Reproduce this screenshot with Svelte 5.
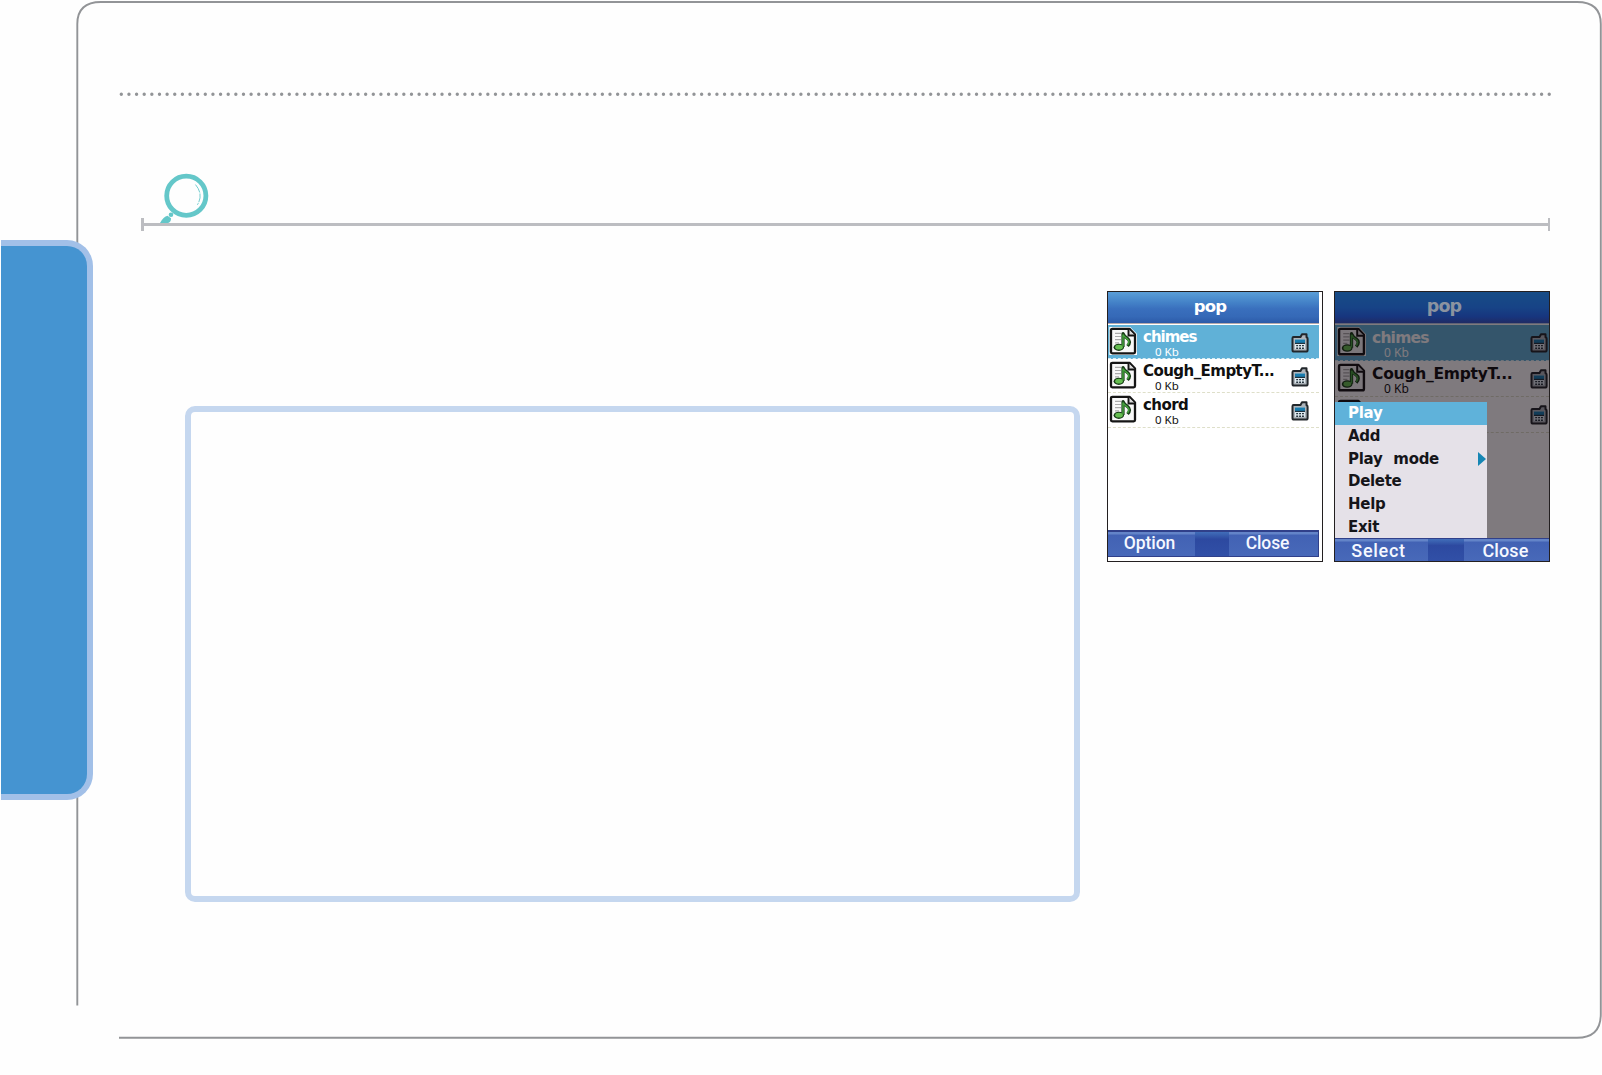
<script lang="ts">
	const tracks = ['chimes', 'Cough_EmptyT...', 'chord'];
	const menu = ['Play', 'Add', 'Play mode', 'Delete', 'Help', 'Exit'];
	let selectedTrack = $state(0);
	let selectedItem = $state(0);
</script>

{#snippet noteIcon()}
	<svg class="note" viewBox="0 0 28 28">
		<path d="M2 1.2H20L26.5 8V26.5H2Z" fill="#fbfbfb" stroke="#fff" stroke-width="3.4" />
		<path
			d="M3.5 1.8H20.5L26 7.5V25Q26 26.3 24.7 26.3H3.3Q2 26.3 2 25V3.2Q2 1.8 3.5 1.8Z"
			fill="#f8f8f8"
			stroke="#151515"
			stroke-width="2.3"
			stroke-linejoin="round"
		/>
		<path d="M19.5 2V8.5H26" fill="#ddd" stroke="#151515" stroke-width="1.9" />
		<path d="M6 6.3H12M6 9.5H12M6 12.7H12M6 15.9H10" stroke="#aaa" stroke-width="1.2" />
		<path
			d="M14 20V6.5Q15 9.5 18.5 11.5Q22.5 14.5 18.5 19"
			fill="none"
			stroke="#173c16"
			stroke-width="3.2"
			stroke-linejoin="round"
		/>
		<ellipse cx="9.8" cy="20.3" rx="5.2" ry="3.6" fill="#173c16" />
		<path d="M14 19.5V7.5Q15 10 18.3 12Q21.5 14.5 18.5 18" fill="none" stroke="#45a23e" stroke-width="1.5" />
		<ellipse cx="10" cy="20.2" rx="3.8" ry="2.4" fill="#65bd50" />
	</svg>
{/snippet}

{#snippet deviceIcon()}
	<svg class="device" viewBox="0 0 18 20">
		<path
			d="M2.5 4H9.5L11 1.3H15.5V4.3Q16.6 4.6 16.6 5.8V17Q16.6 18.6 15 18.6H3Q1.5 18.6 1.5 17V5.2Q1.5 4 2.5 4Z"
			fill="#aeb5bb"
			stroke="#22272b"
			stroke-width="2"
			stroke-linejoin="round"
		/>
		<path d="M4 6.7H14V15.8H4Z" fill="#dfeaf0" />
		<path d="M4 6.5H14V10H4Z" fill="#187cae" />
		<path d="M4 10.4H14" stroke="#20313c" stroke-width="1.2" />
		<path d="M5.2 12.6H13M5.2 15.2H13" stroke="#26343d" stroke-width="1.4" stroke-dasharray="1.9 1" />
	</svg>
{/snippet}

{#snippet playlist(named: number)}
	<ul class="tracks">
		{#each tracks as name, i}
			<li class:active={i === selectedTrack}>
				{@render noteIcon()}
				<div class="info">
					{#if i < named}
						<span class="name" class:wide={i > 0}>{name}</span>
						<span class="size">0 Kb</span>
					{/if}
				</div>
				{@render deviceIcon()}
			</li>
		{/each}
	</ul>
{/snippet}

<div class="page">
	<svg class="outline" viewBox="0 0 1602 1075">
		<path d="M77.3 1005.6V24Q77.3 2 101 2H1577Q1600.8 2 1600.8 24V1014Q1600.8 1037.8 1577 1037.8H119" />
	</svg>
	<aside></aside>

	<main>
		<svg class="dots" viewBox="0 0 1432 4">
			<line x1="2.3" y1="2.3" x2="1430.6" y2="2.3" />
		</svg>

		<header>
			<svg class="lens" viewBox="0 0 50 54">
				<circle cx="27.3" cy="24.7" r="19.6" fill="none" stroke="#64c7c9" stroke-width="4.8" />
				<path
					d="M36.5 13.6Q44.8 23.5 38.4 33.8"
					fill="none"
					stroke="#64c7c9"
					stroke-width=".9"
					stroke-dasharray="9 1"
				/>
				<circle cx="12" cy="43.8" r="2.3" fill="#64c7c9" />
				<path d="M1 52Q4.5 45.5 8.5 44.8L12 47.2Q12.2 50.6 9.2 52Z" fill="#64c7c9" />
			</svg>
			<div class="rule"></div>
		</header>

		<div class="content">
			<section class="panel"></section>

			<div class="phone first">
				<div class="screen">
					<h2>pop</h2>
					{@render playlist(3)}
					<footer><button>Option</button><i></i><button>Close</button></footer>
				</div>
			</div>

			<div class="phone second">
				<div class="screen">
					<h2>pop</h2>
					<!-- the open menu hides the last track's text -->
					{@render playlist(2)}
					<div class="shade"></div>
					<div class="menu">
						{#each menu as item, i}
							<button class:active={i === selectedItem} onclick={() => (selectedItem = i)}>
								{item}
								{#if item === 'Play mode'}
									<svg viewBox="0 0 8 14"><path d="M0 0L8 7L0 14Z" /></svg>
								{/if}
							</button>
						{/each}
					</div>
					<footer><button>Select</button><i></i><button>Close</button></footer>
				</div>
			</div>
		</div>
	</main>
</div>

<style>
	:global(body) {
		margin: 0;
		background: #fefefe;
	}

	.page {
		position: relative;
		display: flex;
		width: 1602px;
		height: 1075px;
		overflow: hidden;
		box-sizing: border-box;
		font-family: 'DejaVu Sans', sans-serif;
	}

	.outline {
		position: absolute;
		inset: 0;
		width: 1602px;
		height: 1075px;
		fill: none;
		stroke: #929497;
		stroke-width: 1.9;
	}

	aside {
		position: relative;
		box-sizing: border-box;
		width: 92px;
		height: 560px;
		margin: 240px 0 0 1px;
		border: 6px solid #a2c0e8;
		border-left: 0;
		border-radius: 0 26px 26px 0;
		background: #4594d1;
	}

	main {
		display: flex;
		flex-direction: column;
		width: 1432px;
		margin-left: 26px;
		padding-top: 92px;
	}

	.dots {
		width: 1432px;
		height: 4px;
		flex: none;
		overflow: visible;
		stroke: #929497;
		stroke-width: 3.4;
		stroke-linecap: round;
		stroke-dasharray: 0 7.636;
	}

	header {
		margin: 75px 0 0 22px;
	}

	.lens {
		display: block;
		width: 50px;
		height: 54px;
		margin-left: 18px;
		margin-bottom: -7px;
	}

	.rule {
		display: flex;
		align-items: center;
		width: 1404px;
		height: 13px;
		border: solid #bcbdc1;
		border-width: 0 2px 0 3px;
	}

	.rule::before {
		content: '';
		width: 100%;
		height: 3px;
		background: #bcbdc1;
	}

	.content {
		display: flex;
		align-items: flex-start;
		margin: 60px 0 0 66px;
	}

	.panel {
		box-sizing: border-box;
		width: 895px;
		height: 496px;
		margin-top: 115px;
		border: 6px solid #c5d7ef;
		border-radius: 10px;
	}

	.phone {
		box-sizing: border-box;
		width: 216px;
		height: 271px;
		border: 1px solid #231f20;
		background: #fff;
		overflow: hidden;
	}

	.first {
		margin-left: 27px;
		--row: 34.2px;
		--icon: 28px;
	}

	.second {
		margin-left: 11px;
		--row: 36px;
		--icon: 29px;
	}

	.screen {
		position: relative;
		display: flex;
		flex-direction: column;
		height: 265px;
		width: 211px;
	}

	.second .screen {
		width: 214px;
		height: 269px;
	}

	h2 {
		flex: none;
		height: 32px;
		margin: 0;
		border-bottom: 1px solid #b5a9aa;
		box-sizing: border-box;
		background: linear-gradient(#5a9ed7, #4381c7 35%, #396fbd 55%, #3569b7 80%, #2c5aa8);
		color: #fff;
		font: bold 16.5px/29px 'DejaVu Sans', sans-serif;
		letter-spacing: -0.8px;
		text-align: center;
		text-indent: -7px;
	}

	.second h2 {
		border-color: #5e6276;
		background: linear-gradient(#174c86, #174386 50%, #17357e 80%, #202b64);
		color: #8b93a0;
		font-size: 17.5px;
		text-indent: 4px;
		position: relative;
		z-index: 1;
	}

	.tracks {
		flex: 1;
		margin: 1px 0 0;
		padding: 0;
		list-style: none;
	}

	li {
		display: flex;
		box-sizing: border-box;
		height: var(--row);
		padding: 2px 10px 0 1px;
		border-bottom: 1px dashed #dedfc9;
		color: #101010;
	}

	.second li {
		padding-right: 1px;
		padding-left: 2px;
	}

	li.active {
		border-bottom-color: #d8edf5;
		background: #60b1d7;
		color: #fff;
	}

	.note {
		flex: none;
		width: var(--icon);
		height: var(--icon);
	}

	.info {
		flex: 1;
		min-width: 0;
		margin: 0 0 0 6px;
		display: flex;
		flex-direction: column;
	}

	.name {
		font-weight: bold;
		font-size: 15px;
		line-height: 20px;
		letter-spacing: -1px;
		white-space: nowrap;
	}

	.name.wide {
		letter-spacing: -0.55px;
	}

	.second .name {
		font-size: 15.5px;
		line-height: 22px;
		letter-spacing: -0.8px;
	}

	.second .name.wide {
		letter-spacing: -0.25px;
	}

	.size {
		margin: -2px 0 0 12px;
		font: 11.5px/13px 'Noto Sans', sans-serif;
	}

	.second .size {
		margin-top: -3px;
		font-size: 12px;
	}

	.device {
		flex: none;
		width: 18px;
		height: 20px;
		margin-top: 6px;
	}

	footer {
		display: grid;
		grid-template-columns: 87px 34px 1fr;
		flex: none;
		box-sizing: border-box;
		height: 27px;
		border: 1px solid #30408a;
		border-width: 2px 1px 1px 0;
		background: linear-gradient(#6384c8 2px, #4262b4 3px, #4869b9);
		position: relative;
	}

	.second footer {
		grid-template-columns: 93px 36px 1fr;
		height: 23px;
		border-width: 1px 0 0;
	}

	footer i {
		background: linear-gradient(#416eb9, #2d49a0 30%, #3150a7);
	}

	footer button {
		padding: 0;
		border: 0;
		background: none;
		color: #f5f8ff;
		font: 500 17.5px/20px Roboto, sans-serif;
		letter-spacing: -0.1px;
	}

	.first footer button {
		padding: 0 4px 2px 0;
	}

	.first footer button:last-child {
		padding-right: 12px;
	}

	.second footer button {
		padding: 2px 2px 0 0;
		font-size: 18px;
		letter-spacing: 0.1px;
	}

	.second footer button:first-child {
		padding-right: 6px;
		letter-spacing: 0.7px;
	}

	.shade {
		position: absolute;
		inset: 32px 0 0;
		background: rgba(13, 3, 12, 0.53);
	}

	.menu {
		position: absolute;
		left: 0;
		top: 110px;
		width: 152px;
		height: 136px;
		display: flex;
		flex-direction: column;
		background: #e5e1e8;
	}

	.menu button {
		display: flex;
		align-items: center;
		flex: 1;
		padding: 0 1px 0 13px;
		border: 0;
		background: none;
		color: #151519;
		font: bold 15px/20px 'DejaVu Sans', sans-serif;
		letter-spacing: -0.3px;
		word-spacing: 6px;
		text-align: left;
		justify-content: space-between;
	}

	.menu .active {
		background: #5fb2da;
		color: #fff;
	}

	.menu svg {
		width: 8px;
		height: 14px;
		fill: #1686b4;
	}
</style>
